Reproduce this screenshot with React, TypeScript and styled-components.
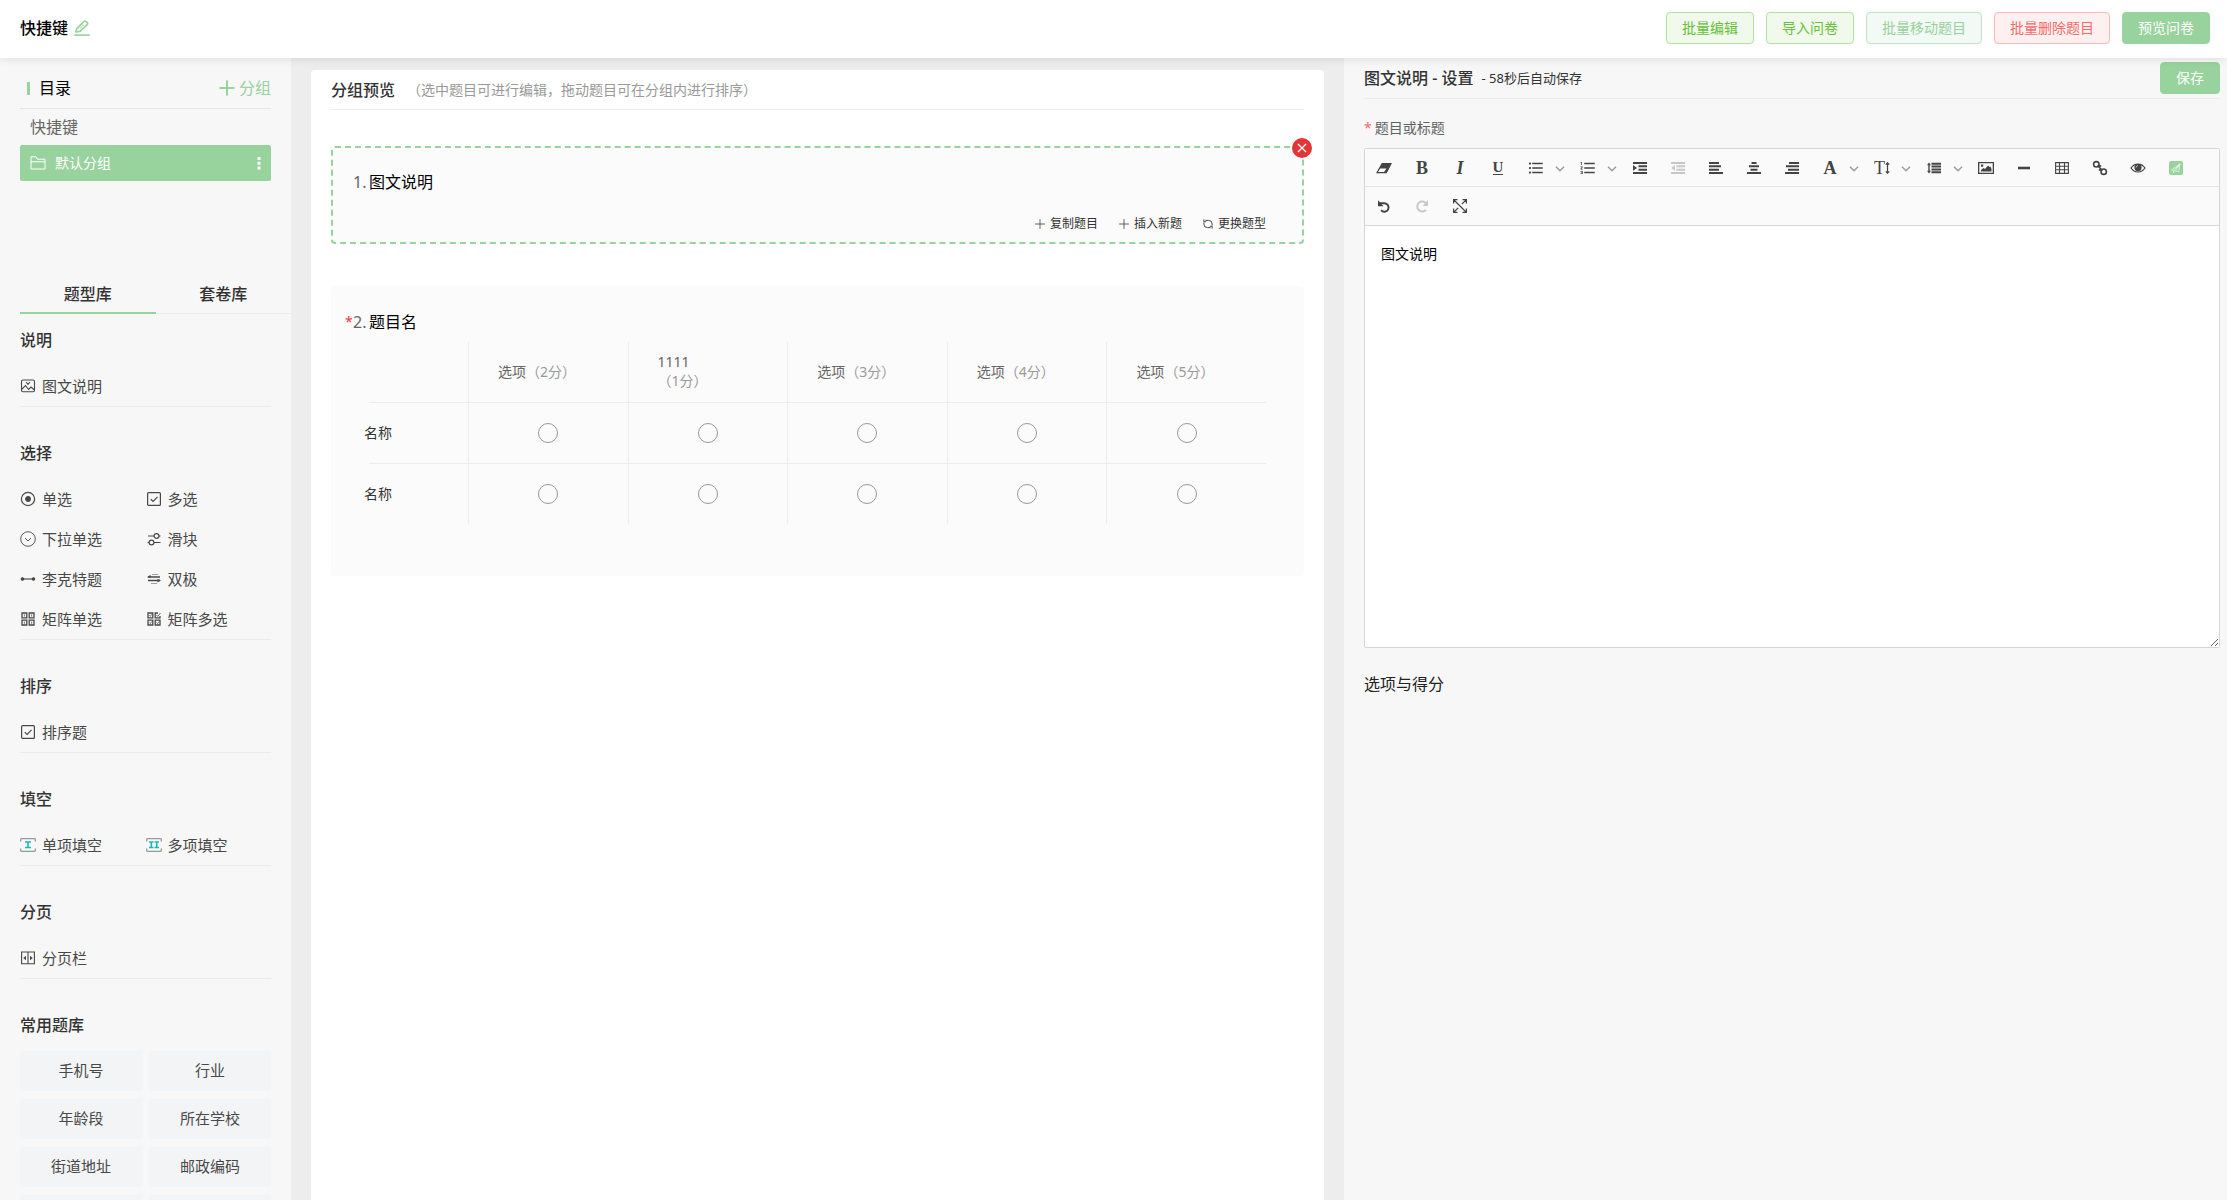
import React, { useState } from "react";
import styled, { createGlobalStyle } from "styled-components";
import { MdFormatListBulleted, MdFormatListNumbered } from "react-icons/md";

const green = "#98d29d";
const line = "#ececec";

const GlobalStyle = createGlobalStyle`
  *, *::before, *::after { box-sizing: border-box; }
  body {
    margin: 0;
    color: #333;
    background: #ededed;
    font-family: "Noto Sans", "Noto Sans CJK SC", sans-serif;
    font-size: 14px;
  }
  button, textarea, input { font-family: inherit; }
  button { border: 0; padding: 0; background: none; color: inherit; cursor: pointer; }
  h1, h2, h3, p { margin: 0; }
  svg { display: block; flex: none; }
`;

const Page = styled.div`
  display: flex;
  flex-direction: column;
  height: 100vh;
  overflow: hidden;
`;

const Header = styled.header`
  position: relative;
  z-index: 2;
  display: flex;
  align-items: center;
  justify-content: space-between;
  flex: none;
  height: 58px;
  padding: 0 17px 2px 20px;
  background: #fff;
  box-shadow: 0 0 10px rgba(0, 0, 0, 0.12);
`;

const TitleGroup = styled.div`
  display: flex;
  align-items: center;
  gap: 6px;
`;

const PageTitle = styled.h1`
  color: #000;
  font-size: 16px;
  font-weight: 500;
  line-height: 24px;
`;

const IconButton = styled.button`
  display: flex;
  align-items: center;
  color: ${green};
`;

const Actions = styled.div`
  display: flex;
  gap: 12px;
`;

const tones = {
  success: { text: "#67c23a", bg: "#f0f9eb", border: "#b3e19d" },
  soft: { text: green, bg: "#f3f9f4", border: "#c1e0c5" },
  danger: { text: "#f56c6c", bg: "#fef0f0", border: "#fbb8b8" },
  primary: { text: "#fff", bg: green, border: green },
};

const ActionButton = styled.button<{ $tone: keyof typeof tones }>`
  height: 32px;
  padding: 0 15px;
  border: 1px solid ${(p) => tones[p.$tone].border};
  border-radius: 4px;
  background: ${(p) => tones[p.$tone].bg};
  color: ${(p) => tones[p.$tone].text};
  font-size: 14px;
  line-height: 20px;
`;

const Columns = styled.div`
  display: grid;
  grid-template-columns: 291px minmax(0, 1053fr) minmax(0, 883fr);
  flex: 1;
  min-height: 0;
`;

/* ---------- left column ---------- */

const Sidebar = styled.aside`
  display: flex;
  flex-direction: column;
  min-height: 0;
  padding-top: 12px;
  background: #f7f7f7;
`;

const DirectoryHead = styled.div`
  display: flex;
  align-items: center;
  justify-content: space-between;
  flex: none;
  height: 39px;
  margin: 0 20px;
  padding-bottom: 2px;
  border-bottom: 1px solid #e4e4e4;
`;

const DirectoryTitle = styled.h2`
  display: flex;
  align-items: center;
  gap: 9px;
  padding-left: 7px;
  color: #000;
  font-size: 16px;
  font-weight: 400;
  line-height: 24px;
  &::before {
    content: "";
    width: 3px;
    height: 13px;
    background: ${green};
  }
`;

const AddGroup = styled.button`
  display: flex;
  align-items: center;
  gap: 4px;
  color: ${green};
  font-size: 16px;
  line-height: 24px;
`;

const Tree = styled.nav`
  flex: none;
  min-height: 165px;
  padding: 0 20px;
`;

const TreeRoot = styled.div`
  padding-left: 10px;
  color: #666;
  font-size: 16px;
  line-height: 36px;
`;

const TreeGroup = styled.div`
  display: flex;
  align-items: center;
  justify-content: space-between;
  height: 36px;
  padding: 0 10px;
  border-radius: 2px;
  background: ${green};
  color: #fff;
`;

const TreeName = styled.button`
  display: flex;
  align-items: center;
  gap: 9px;
  font-size: 14px;
  line-height: 20px;
`;

const Tabs = styled.div`
  display: grid;
  grid-template-columns: 1fr 1fr;
  flex: none;
  height: 40px;
  margin-left: 20px;
  box-shadow: inset 0 -1px 0 ${line};
`;

const Tab = styled.button<{ $active: boolean }>`
  border-bottom: 2px solid ${(p) => (p.$active ? green : "transparent")};
  padding-top: 2px;
  font-size: 16px;
  font-weight: 500;
  line-height: 24px;
`;

const Library = styled.div`
  flex: 1;
  min-height: 0;
  padding: 14px 20px 0;
  overflow-y: auto;
  scrollbar-width: none;
`;

const Section = styled.section`
  & + & { margin-top: 34px; }
`;

const SectionTitle = styled.h3`
  margin-bottom: 14px;
  font-size: 16px;
  font-weight: 500;
  line-height: 24px;
`;

const TypeGrid = styled.div`
  display: grid;
  grid-template-columns: 1fr 1fr;
  border-bottom: 1px solid ${line};
`;

const TypeItem = styled.button`
  display: flex;
  align-items: center;
  gap: 6px;
  height: 40px;
  color: #484848;
  font-size: 15px;
  line-height: 22px;
`;

const PresetGrid = styled.div`
  display: grid;
  grid-template-columns: 1fr 1fr;
  gap: 8px 7px;
`;

const Preset = styled.button`
  height: 40px;
  padding-bottom: 2px;
  border-radius: 2px;
  background: #f3f4f6;
  color: #484848;
  font-size: 15px;
  line-height: 22px;
`;

/* ---------- middle column ---------- */

const Main = styled.main`
  display: flex;
  min-width: 0;
  min-height: 0;
  padding: 12px 20px 0;
  background: #ededed;
`;

const Preview = styled.div`
  flex: 1;
  min-width: 0;
  padding: 0 20px;
  border-radius: 4px 4px 0 0;
  background: #fff;
  overflow-y: auto;
  scrollbar-width: none;
`;

const PreviewHead = styled.div`
  display: flex;
  align-items: center;
  gap: 12px;
  height: 40px;
  margin-bottom: 36px;
  border-bottom: 1px solid ${line};
`;

const PreviewTitle = styled.h2`
  font-size: 16px;
  font-weight: 500;
  line-height: 24px;
`;

const Hint = styled.p`
  color: #999;
  font-size: 14px;
  line-height: 20px;
`;

const Question = styled.section<{ $selected?: boolean }>`
  position: relative;
  padding: 23px 36px ${(p) => (p.$selected ? 8 : 50)}px;
  border: 2px ${(p) => (p.$selected ? `dashed ${green}` : "solid transparent")};
  border-radius: 4px;
  background: #fbfbfb;
  & + & { margin-top: 42px; }
`;

const QuestionTitle = styled.div`
  display: grid;
  grid-template-columns: 8px 16px 1fr;
  margin-left: -24px;
  color: #000;
  font-size: 16px;
  line-height: 22px;
`;

const Star = styled.span`
  color: #f33;
  font-size: 14px;
`;

const Index = styled.span`
  color: #666;
`;

const QuestionTools = styled.div`
  display: flex;
  justify-content: flex-end;
  gap: 20px;
  margin-top: 21px;
`;

const Tool = styled.button`
  display: flex;
  align-items: center;
  gap: 4px;
  font-size: 12px;
  line-height: 20px;
`;

const CloseBadge = styled.button`
  position: absolute;
  top: -10px;
  right: -10px;
  display: flex;
  align-items: center;
  justify-content: center;
  width: 20px;
  height: 20px;
  border-radius: 50%;
  background: #e23636;
  color: #fff;
`;

const Matrix = styled.table`
  width: 100%;
  margin-top: 9px;
  border-spacing: 0;
  table-layout: fixed;
  font-size: 14px;
  line-height: 19px;
  th, td { height: 61px; padding: 0; border-bottom: 1px solid ${line}; font-weight: 400; }
  th { padding-bottom: 2px; }
  th + th, th + td, td + td { border-left: 1px solid ${line}; }
  thead th + th, thead td + th { padding-left: 29px; text-align: left; }
  tbody tr:last-child th, tbody tr:last-child td { height: 60px; border-bottom: 0; }
`;

const LabelColumn = styled.col`
  width: 99px;
`;

const ColumnLabel = styled.span`
  color: #666;
`;

const Score = styled.span<{ $stacked?: boolean }>`
  display: ${(p) => (p.$stacked ? "block" : "inline")};
  color: #999;
`;

const RowLabel = styled.span`
  display: block;
  margin-left: -5px;
  text-align: left;
`;

const Radio = styled.input`
  display: block;
  appearance: none;
  width: 20px;
  height: 20px;
  margin: 0 auto;
  border: 1px solid #999;
  border-radius: 50%;
  &:checked { border: 6px solid ${green}; }
`;

/* ---------- right column ---------- */

const Settings = styled.aside`
  display: flex;
  flex-direction: column;
  min-width: 0;
  padding: 0 7px 0 20px;
  background: #f7f7f7;
`;

const SettingsHead = styled.div`
  display: flex;
  align-items: center;
  justify-content: space-between;
  height: 41px;
  border-bottom: 1px solid ${line};
`;

const SettingsTitle = styled.h2`
  display: flex;
  align-items: center;
  gap: 8px;
  font-size: 16px;
  font-weight: 500;
  line-height: 24px;
`;

const Countdown = styled.span`
  font-size: 13px;
  font-weight: 400;
`;

const FieldLabel = styled.label`
  margin: 19px 0 10px;
  color: #606266;
  font-size: 14px;
  line-height: 20px;
  &::before { content: "*"; margin-right: 3px; color: #f56c6c; }
`;

const Editor = styled.div`
  display: flex;
  flex-direction: column;
  border: 1px solid #d5d5d5;
  border-radius: 2px;
  background: #fff;
`;

const ToolbarRow = styled.div<{ $last?: boolean }>`
  display: flex;
  height: ${(p) => (p.$last ? 39 : 38)}px;
  border-bottom: 1px solid ${(p) => (p.$last ? "#d5d5d5" : "#e4e4e4")};
  background: #fafafa;
`;

const ToolButton = styled.button<{ $muted?: boolean }>`
  display: flex;
  align-items: center;
  justify-content: center;
  width: 38px;
  color: ${(p) => (p.$muted ? "#c8c8c8" : "#444")};
`;

const Caret = styled.button`
  display: flex;
  align-items: center;
  width: 14px;
  padding-top: 2px;
  color: #999;
`;

const Letter = styled.span<{ $bold?: boolean; $italic?: boolean; $small?: boolean }>`
  font-family: "Liberation Serif", serif;
  font-size: ${(p) => (p.$small ? 15 : 18)}px;
  line-height: ${(p) => (p.$small ? 13 : 20)}px;
  font-weight: ${(p) => (p.$bold ? 700 : 400)};
  font-style: ${(p) => (p.$italic ? "italic" : "normal")};
  border-bottom: ${(p) => (p.$small ? "1px solid" : "0")};
`;

const EditorArea = styled.textarea`
  display: block;
  width: 100%;
  height: 421px;
  padding: 16px;
  border: 0;
  outline: 0;
  background: #fff;
  color: #000;
  font-size: 14px;
  line-height: 24px;
  resize: vertical;
`;

const ScoreTitle = styled.h3`
  margin-top: 24px;
  color: #222;
  font-size: 16px;
  font-weight: 400;
  line-height: 24px;
`;

/* ---------- icons ---------- */

type IconProps = { size?: number; width?: number; children: React.ReactNode };

const Icon = ({ size = 16, width = 1, children }: IconProps) => (
  <svg width={size} height={size} viewBox="0 0 16 16" fill="none" stroke="currentColor" strokeWidth={width} aria-hidden="true">
    {children}
  </svg>
);

const PencilIcon = () => (
  <Icon width={1.7}>
    <path d="M1.8 12 2.8 8.600 10 1.500a1.400 1.400 0 0 1 2 0l1.200 1.100a1.400 1.400 0 0 1 0 2L6 11.300z" strokeLinejoin="round" />
    <path d="M.3 15.100h15.400" />
    <path d="m5.800 8.600 4-3.900" strokeWidth="1" />
  </Icon>
);
const BigPlus = () => <Icon width={2}><path d="M8 .5v15M.5 8h15" /></Icon>;
const FolderIcon = () => <Icon><path d="M1 14V1.8h5l1.4 2.4H15V14zM1 6.8h14" /></Icon>;
const MoreIcon = () => (
  <svg width="4" height="14" viewBox="0 0 4 14" fill="currentColor" aria-hidden="true">
    <path d="M.5 1h3v3h-3zM.5 5.7h3v3h-3zM.5 10.4h3v3h-3z" />
  </svg>
);
const PictureIcon = () => (
  <Icon width={1.1}>
    <rect x="1.500" y="2" width="13" height="11.800" rx="1.500" />
    <path d="m1.500 11.500 4-4 3 4 2.500-2.500 3.500 3M6 4l2 2.300L10 4" />
  </Icon>
);
const SingleIcon = () => <Icon width={1.2}><circle cx="8" cy="8" r="6.6" /><circle cx="8" cy="8" r="2.3" fill="currentColor" /></Icon>;
const CheckIcon = () => <Icon width={1.2}><rect x="1.6" y="1.6" width="12.8" height="12.8" rx="1" /><path d="m4.8 8.2 2.3 2.2 4.4-4.6" /></Icon>;
const DropIcon = () => <Icon width={0.9}><circle cx="8" cy="8" r="7.3" /><path d="m5 7 3 3 3-3" /></Icon>;
const SliderIcon = () => (
  <Icon width={1.2}><path d="M2 5h6M13 5h1.5M1.5 11.5H3M8 11.5h6.5" /><circle cx="10.5" cy="5" r="2.4" /><circle cx="5.5" cy="11.5" r="2.4" /></Icon>
);
const LikertIcon = () => <Icon width={1.2}><path d="M2 8h12" /><circle cx="2.5" cy="8" r="1.2" fill="currentColor" /><circle cx="13.5" cy="8" r="1.2" fill="currentColor" /></Icon>;
const BipolarIcon = () => (
  <Icon><path d="M2 6h12M2 9.5h12" strokeWidth="1.3" /><path d="M6 3.5h6M5 12.5h6" opacity=".5" /><path d="M1 6.300 4.500 3.800v3zM15 9.200 11.500 8v3.500z" fill="currentColor" stroke="none" /></Icon>
);
const MatrixIcon = () => (
  <Icon width={1.3}><path d="M2 2h4.8v4.8H2zM9.2 2H14v4.8H9.2zM2 9.2h4.8V14H2zM9.2 9.2H14V14H9.2z" /><path d="M4.4 3.5v2M11.6 3.5v2M4.4 10.7v2M11.6 10.7v2" strokeWidth=".8" /></Icon>
);
const MatrixMultiIcon = () => (
  <Icon width={1.3}><path d="M2 2h4.8v4.8H2zM12 2H9.2v4.8H14V5M2 9.2h4.8V14H2zM9.2 9.2H14V14H9.2z" /><path d="m10.5 4 1.2 1.3L14.5 2M3.3 4.3l1 1 1.5-2M3.3 11.5l1 1 1.5-2M10.5 11.5l1 1 1.5-2" strokeWidth=".8" /></Icon>
);
const FillIcon = ({ double }: { double?: boolean }) => (
  <Icon width={1.3}>
    <path d="M.7 4.500V2.500a.8.8 0 0 1 .8-.8h13a.8.8 0 0 1 .8.8v2M.7 11.500v2a.8.8 0 0 0 .8.8h13a.8.8 0 0 0 .8-.8v-2" stroke="#999" />
    <path d={double ? "M3 5h4.5M3 10.5h4.5M5.3 5v5.5M8.5 5H13M8.5 10.5H13M10.7 5v5.5" : "M5 5h6M5 10.5h6M8 5v5.5"} stroke="#1fb8b8" strokeWidth="1.6" />
  </Icon>
);
const PageBreakIcon = () => (
  <Icon width={1.1}><path d="M1.6 2h12.8v11.8H1.6zM8 2v12" /><path d="M6 5.8v4.4L3.2 8zM10 5.8v4.4L12.8 8z" fill="currentColor" stroke="none" /></Icon>
);
const ThinPlus = () => <Icon size={12} width={1}><path d="M8 1.5v13M1.5 8h13" /></Icon>;
const RefreshIcon = () => (
  <Icon size={12} width={1.2}>
    <path d="M4.500 3.200h4.300a4.700 4.700 0 0 1 4.700 4.700V10M2.500 6v2.100a4.700 4.700 0 0 0 4.700 4.700h4.300M2.500 2v3h3M13.500 14v-3h-3" />
  </Icon>
);
const CrossIcon = () => <Icon size={10} width={2}><path d="M1.5 1.5l13 13M14.5 1.5l-13 13" /></Icon>;

const Solid = ({ d }: { d: string }) => (
  <svg width="16" height="16" viewBox="0 0 16 16" fill="currentColor" fillRule="evenodd" aria-hidden="true"><path d={d} /></svg>
);
const EraserIcon = () => <Solid d="M5.8 3H16l-5.3 10.300H0zM4.2 8.500 2 12h6l2.500-3.500z" />;
const IndentIcon = () => <Solid d="M1 2h14v2H1zM6.5 5.3H15v2H6.5zM6.5 8.7H15v2H6.5zM1 12h14v2H1zM1 5l4 2.900-4 2.900z" />;
const OutdentIcon = () => <Solid d="M1 2h14v2H1zM6.5 5.3H15v2H6.5zM6.5 8.7H15v2H6.5zM1 12h14v2H1zM5 5 1 7.900l4 2.900z" />;
const LeftIcon = () => <Solid d="M1 2h10v2H1zM1 5.3h12v2H1zM1 8.7h10v2H1zM1 12h14v2H1z" />;
const CenterIcon = () => <Solid d="M5.5 2h5v2h-5zM3 5.3h10v2H3zM4.5 8.7h7v2h-7zM1 12h14v2H1z" />;
const RightIcon = () => <Solid d="M5 2h10v2H5zM2 5.3h13v2H2zM4 8.7h11v2H4zM1 12h14v2H1z" />;
const LineHeightIcon = () => <Solid d="M5.5 2.800H15v2H5.500zM5.500 5.600H15v2H5.500zM5.500 8.400H15v2H5.500zM5.500 11.200H15v2H5.500zM3 2.500l2 2.700H3.700v5.600H5l-2 2.700-2-2.700h1.300V5.200H1z" />;
const ImageIcon = () => <Solid d="M0 2h16v12H0zM1.3 3.300v9.400h13.400V3.300zM3 11.500V10l2.500-2 1.500 1 3-3.500 1.500 1.500 1-.5L13.500 9v2.500zM3 4.500h2.200v2.200H3z" />;
const HrIcon = () => <Solid d="M2 6.7h12v2.600H2z" />;
const TableIcon = () => <Icon width={1.1}><path d="M1.600 2.600h12.800v10.800H1.600zM1.600 6.200h12.800M1.600 9.800h12.800M5.500 2.600v10.800M10.500 2.600v10.800" /></Icon>;
const LinkIcon = () => <Icon width={1.6}><circle cx="4.300" cy="4.300" r="2.700" /><circle cx="11.700" cy="11.700" r="2.700" /><path d="m5.500 5.500 5 5M7 5.300l2.200.9M7 9.500l1.800 1.200" /></Icon>;
const EyeIcon = () => (
  <Icon width={1.2}><path d="M1 8c3.400-5.300 10.600-5.300 14 0-3.400 5.300-10.600 5.300-14 0z" /><circle cx="8" cy="7.600" r="3" fill="currentColor" /><path d="M6.200 7.400c0-1 .7-1.600 1.600-1.700" stroke="#fafafa" strokeWidth=".8" /></Icon>
);
const PlaneIcon = () => (
  <svg width="14" height="14" viewBox="0 0 14 14" fill="none" stroke="#e6f6e8" strokeWidth=".8" aria-hidden="true">
    <rect width="14" height="14" rx="2" fill={green} stroke="none" />
    <path d="M11 2.800 2.500 9l2 .8zM11 2.800 9.800 10.800 6.500 9.800zM4.500 9.800v2l2-2" />
  </svg>
);
const UndoIcon = () => <Icon width={2}><path d="M4 5.300h4.500a4.200 4.200 0 1 1-3.400 6.800" /><path d="M2 2.200v6h5.500z" fill="currentColor" stroke="none" /></Icon>;
const RedoIcon = () => <Icon width={2}><path d="M12.200 5.500A5 5 0 1 0 12 11.800" /><path d="M14 2v6H8.500z" fill="currentColor" stroke="none" /></Icon>;
const FullIcon = () => <Icon width={1.2}><path d="M1.600 5.500V1.600h3.900M10.500 1.600h3.900v3.900M14.400 10.500v3.900h-3.900M5.500 14.400H1.600v-3.900M2 2l12 12M14 2 9.800 6.200M2 14l4.200-4.200" /></Icon>;
const ChevronIcon = () => <svg width="10" height="6" viewBox="0 0 10 6" fill="none" stroke="currentColor" strokeWidth="1.4" aria-hidden="true"><path d="m1 .8 4 4 4-4" /></svg>;
const SizeArrowIcon = () => <svg width="5" height="12" viewBox="0 0 5 12" fill="none" stroke="currentColor" strokeWidth="1.2" aria-hidden="true"><path d="M2.500 1v10M.8 2.600 2.500.8l1.700 1.800M.8 9.400l1.700 1.800 1.700-1.800" /></svg>;

/* ---------- data ---------- */

const sections: { title: string; items: { name: string; icon: React.ReactNode }[] }[] = [
  { title: "说明", items: [{ name: "图文说明", icon: <PictureIcon /> }] },
  {
    title: "选择",
    items: [
      { name: "单选", icon: <SingleIcon /> },
      { name: "多选", icon: <CheckIcon /> },
      { name: "下拉单选", icon: <DropIcon /> },
      { name: "滑块", icon: <SliderIcon /> },
      { name: "李克特题", icon: <LikertIcon /> },
      { name: "双极", icon: <BipolarIcon /> },
      { name: "矩阵单选", icon: <MatrixIcon /> },
      { name: "矩阵多选", icon: <MatrixMultiIcon /> },
    ],
  },
  { title: "排序", items: [{ name: "排序题", icon: <CheckIcon /> }] },
  { title: "填空", items: [{ name: "单项填空", icon: <FillIcon /> }, { name: "多项填空", icon: <FillIcon double /> }] },
  { title: "分页", items: [{ name: "分页栏", icon: <PageBreakIcon /> }] },
];

const presets = ["手机号", "行业", "年龄段", "所在学校", "街道地址", "邮政编码", "", ""];

const options = [
  { label: "选项", score: 2 },
  { label: "1111", score: 1, stacked: true },
  { label: "选项", score: 3 },
  { label: "选项", score: 4 },
  { label: "选项", score: 5 },
];

const tools: { name: string; icon: React.ReactNode; menu?: boolean; muted?: boolean }[] = [
  { name: "清除样式", icon: <EraserIcon /> },
  { name: "加粗", icon: <Letter $bold>B</Letter> },
  { name: "斜体", icon: <Letter $bold $italic>I</Letter> },
  { name: "下划线", icon: <Letter $bold $small>U</Letter> },
  { name: "无序列表", icon: <MdFormatListBulleted size={18} />, menu: true },
  { name: "有序列表", icon: <MdFormatListNumbered size={18} />, menu: true },
  { name: "增加缩进", icon: <IndentIcon /> },
  { name: "减少缩进", icon: <OutdentIcon />, muted: true },
  { name: "左对齐", icon: <LeftIcon /> },
  { name: "居中", icon: <CenterIcon /> },
  { name: "右对齐", icon: <RightIcon /> },
  { name: "文字颜色", icon: <Letter $bold>A</Letter>, menu: true },
  { name: "字号", icon: <><Letter>T</Letter><SizeArrowIcon /></>, menu: true },
  { name: "行高", icon: <LineHeightIcon />, menu: true },
  { name: "图片", icon: <ImageIcon /> },
  { name: "分割线", icon: <HrIcon /> },
  { name: "表格", icon: <TableIcon /> },
  { name: "链接", icon: <LinkIcon /> },
  { name: "预览", icon: <EyeIcon /> },
  { name: "发送", icon: <PlaneIcon /> },
];

export default function App() {
  const [tab, setTab] = useState("题型库");
  return (
    <Page>
      <GlobalStyle />
      <Header>
        <TitleGroup>
          <PageTitle>快捷键</PageTitle>
          <IconButton aria-label="编辑标题"><PencilIcon /></IconButton>
        </TitleGroup>
        <Actions>
          <ActionButton $tone="success">批量编辑</ActionButton>
          <ActionButton $tone="success">导入问卷</ActionButton>
          <ActionButton $tone="soft">批量移动题目</ActionButton>
          <ActionButton $tone="danger">批量删除题目</ActionButton>
          <ActionButton $tone="primary">预览问卷</ActionButton>
        </Actions>
      </Header>
      <Columns>
        <Sidebar>
          <DirectoryHead>
            <DirectoryTitle>目录</DirectoryTitle>
            <AddGroup><BigPlus />分组</AddGroup>
          </DirectoryHead>
          <Tree>
            <TreeRoot>快捷键</TreeRoot>
            <TreeGroup>
              <TreeName><FolderIcon />默认分组</TreeName>
              <button aria-label="更多"><MoreIcon /></button>
            </TreeGroup>
          </Tree>
          <Tabs role="tablist">
            {["题型库", "套卷库"].map((name) => (
              <Tab key={name} role="tab" aria-selected={tab === name} $active={tab === name} onClick={() => setTab(name)}>{name}</Tab>
            ))}
          </Tabs>
          <Library>
            {sections.map((section) => (
              <Section key={section.title}>
                <SectionTitle>{section.title}</SectionTitle>
                <TypeGrid>
                  {section.items.map((item) => <TypeItem key={item.name}>{item.icon}{item.name}</TypeItem>)}
                </TypeGrid>
              </Section>
            ))}
            <Section>
              <SectionTitle>常用题库</SectionTitle>
              <PresetGrid>
                {presets.map((name, i) => <Preset key={i}>{name}</Preset>)}
              </PresetGrid>
            </Section>
          </Library>
        </Sidebar>

        <Main>
          <Preview>
            <PreviewHead>
              <PreviewTitle>分组预览</PreviewTitle>
              <Hint>（选中题目可进行编辑，拖动题目可在分组内进行排序）</Hint>
            </PreviewHead>
            <Question $selected>
              <QuestionTitle><span /><Index>1.</Index><span>图文说明</span></QuestionTitle>
              <QuestionTools>
                <Tool><ThinPlus />复制题目</Tool>
                <Tool><ThinPlus />插入新题</Tool>
                <Tool><RefreshIcon />更换题型</Tool>
              </QuestionTools>
              <CloseBadge aria-label="删除题目"><CrossIcon /></CloseBadge>
            </Question>
            <Question>
              <QuestionTitle><Star>*</Star><Index>2.</Index><span>题目名</span></QuestionTitle>
              <Matrix>
                <colgroup><LabelColumn /></colgroup>
                <thead>
                  <tr>
                    <td />
                    {options.map((o, i) => (
                      <HeadCell key={o.score} scope="col" $first={i === 0}>
                        <ColumnLabel>{o.label}</ColumnLabel>
                        <Score $stacked={o.stacked}>（{o.score}分）</Score>
                      </HeadCell>
                    ))}
                  </tr>
                </thead>
                <tbody>
                  {[1, 2].map((row) => (
                    <tr key={row}>
                      <th scope="row"><RowLabel>名称</RowLabel></th>
                      {options.map((o) => (
                        <td key={o.score}><Radio type="radio" name={`row-${row}`} aria-label={`${o.label} ${o.score}分`} /></td>
                      ))}
                    </tr>
                  ))}
                </tbody>
              </Matrix>
            </Question>
          </Preview>
        </Main>

        <Settings>
          <SettingsHead>
            <SettingsTitle>图文说明 - 设置<Countdown>- 58秒后自动保存</Countdown></SettingsTitle>
            <ActionButton $tone="primary">保存</ActionButton>
          </SettingsHead>
          <FieldLabel htmlFor="question-title">题目或标题</FieldLabel>
          <Editor>
            <ToolbarRow>
              {tools.map((t) => (
                <React.Fragment key={t.name}>
                  <ToolButton aria-label={t.name} $muted={t.muted}>{t.icon}</ToolButton>
                  {t.menu && <Caret aria-label={`${t.name}选项`}><ChevronIcon /></Caret>}
                </React.Fragment>
              ))}
            </ToolbarRow>
            <ToolbarRow $last>
              <ToolButton aria-label="撤销"><UndoIcon /></ToolButton>
              <ToolButton aria-label="重做" $muted><RedoIcon /></ToolButton>
              <ToolButton aria-label="全屏"><FullIcon /></ToolButton>
            </ToolbarRow>
            <EditorArea id="question-title" defaultValue="图文说明" />
          </Editor>
          <ScoreTitle>选项与得分</ScoreTitle>
        </Settings>
      </Columns>
    </Page>
  );
}

const HeadCell = styled.th<{ $first: boolean }>`
  && { border-left: 1px solid ${line}; }
`;
